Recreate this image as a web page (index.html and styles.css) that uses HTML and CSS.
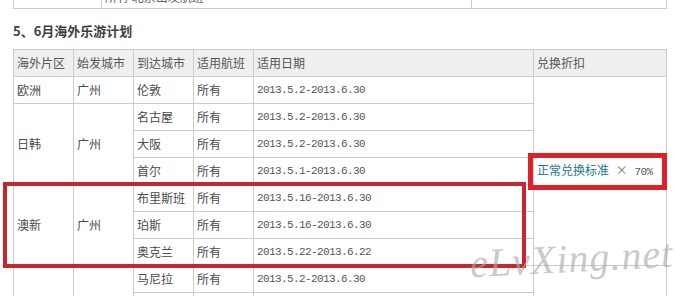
FILE: index.html
```html
<!DOCTYPE html>
<html lang="zh-CN">
<head>
<meta charset="utf-8">
<title>5、6月海外乐游计划</title>
<link rel="stylesheet" href="styles.css">
</head>
<body>
<div class="page">
  <table class="prev">
    <tr>
      <td class="p1"></td>
      <td class="p2">所有 北京出发航班</td>
      <td class="p3"></td>
    </tr>
  </table>

  <h3 class="title">5、6月海外乐游计划</h3>

  <table class="plan">
    <colgroup>
      <col class="c1"><col class="c2"><col class="c3"><col class="c4"><col class="c5"><col class="c6">
    </colgroup>
    <tr class="head">
      <td>海外片区</td><td>始发城市</td><td>到达城市</td><td>适用航班</td><td>适用日期</td><td>兑换折扣</td>
    </tr>
    <tr>
      <td>欧洲</td><td>广州</td><td>伦敦</td><td>所有</td><td class="date">2013.5.2-2013.6.30</td>
      <td rowspan="7" class="disc"><span class="std">正常兑换标准</span> <span class="times">×</span> <span class="pct">70%</span></td>
    </tr>
    <tr>
      <td rowspan="3">日韩</td><td rowspan="3">广州</td><td>名古屋</td><td>所有</td><td class="date">2013.5.2-2013.6.30</td>
    </tr>
    <tr><td>大阪</td><td>所有</td><td class="date">2013.5.2-2013.6.30</td></tr>
    <tr><td>首尔</td><td>所有</td><td class="date">2013.5.1-2013.6.30</td></tr>
    <tr>
      <td rowspan="3">澳新</td><td rowspan="3">广州</td><td>布里斯班</td><td>所有</td><td class="date">2013.5.16-2013.6.30</td>
    </tr>
    <tr><td>珀斯</td><td>所有</td><td class="date">2013.5.16-2013.6.30</td></tr>
    <tr><td>奥克兰</td><td>所有</td><td class="date">2013.5.22-2013.6.22</td></tr>
    <tr>
      <td rowspan="4">东南亚</td><td rowspan="4">广州</td><td>马尼拉</td><td>所有</td><td class="date">2013.5.2-2013.6.30</td>
      <td rowspan="4"></td>
    </tr>
    <tr><td>宿务</td><td>所有</td><td class="date">2013.5.2-2013.6.30</td></tr>
    <tr><td>新加坡</td><td>所有</td><td class="date">2013.5.2-2013.6.30</td></tr>
    <tr><td>曼谷</td><td>所有</td><td class="date">2013.5.2-2013.6.30</td></tr>
  </table>

  <div class="mark mark-rows"></div>
  <div class="mark mark-disc"></div>
  <div class="watermark">eLvXing.net</div>
</div>
</body>
</html>
```

FILE: styles.css
```css
html, body {
  margin: 0;
  padding: 0;
  background: #ffffff;
}

body {
  font-family: "Noto Sans CJK SC", "Liberation Sans", sans-serif;
  font-size: 12px;
  color: #4a4a4a;
}

.page {
  position: relative;
  width: 676px;
  height: 296px;
  overflow: hidden;
}

table {
  border-collapse: collapse;
  margin-left: 13px;
}

td {
  border: 1px solid #cccccc;
  padding: 0 3px;
  white-space: nowrap;
}

.prev {
  margin-top: -19px;
}

.prev td {
  height: 26px;
  vertical-align: bottom;
  line-height: 22px;
}

.prev .p1 { width: 81px; }
.prev .p2 { width: 363px; color: #666; }
.prev .p3 { width: 188px; }

.title {
  margin: 12px 0 8px 13px;
  font-size: 13px;
  line-height: 20px;
  font-weight: bold;
  color: #3f3f3f;
}

.plan .c1, .plan .c2, .plan .c3, .plan .c4 { width: 60px; }
.plan .c5 { width: 280px; }
.plan .c6 { width: 133px; }

.plan td {
  height: 26px;
  line-height: 16px;
  vertical-align: middle;
}

.plan .head td {
  background: #efefef;
  color: #555555;
}

.date {
  font-family: "Liberation Mono", "DejaVu Sans Mono", monospace;
  font-size: 11px;
  letter-spacing: -0.6px;
  color: #555555;
}

.disc {
  padding-left: 3px;
}

.std {
  color: #22798a;
}

.times {
  color: #777777;
  margin: 0 4px;
}

.pct {
  font-family: "Liberation Mono", "DejaVu Sans Mono", monospace;
  font-size: 11px;
  letter-spacing: -0.6px;
  color: #555555;
}

.mark {
  position: absolute;
  box-sizing: border-box;
}

.mark-rows {
  left: 3px;
  top: 182px;
  width: 523px;
  height: 86px;
  border: 4px solid #c4272f;
}

.mark-disc {
  left: 528px;
  top: 153px;
  width: 139px;
  height: 37px;
  border: 5px solid #dc2129;
}

.watermark {
  position: absolute;
  left: 470px;
  top: 236px;
  font-family: "Liberation Serif", serif;
  font-style: italic;
  font-size: 40px;
  line-height: 46px;
  color: rgba(170, 170, 170, 0.65);
  letter-spacing: 1px;
  transform: rotate(-3deg);
}
```
